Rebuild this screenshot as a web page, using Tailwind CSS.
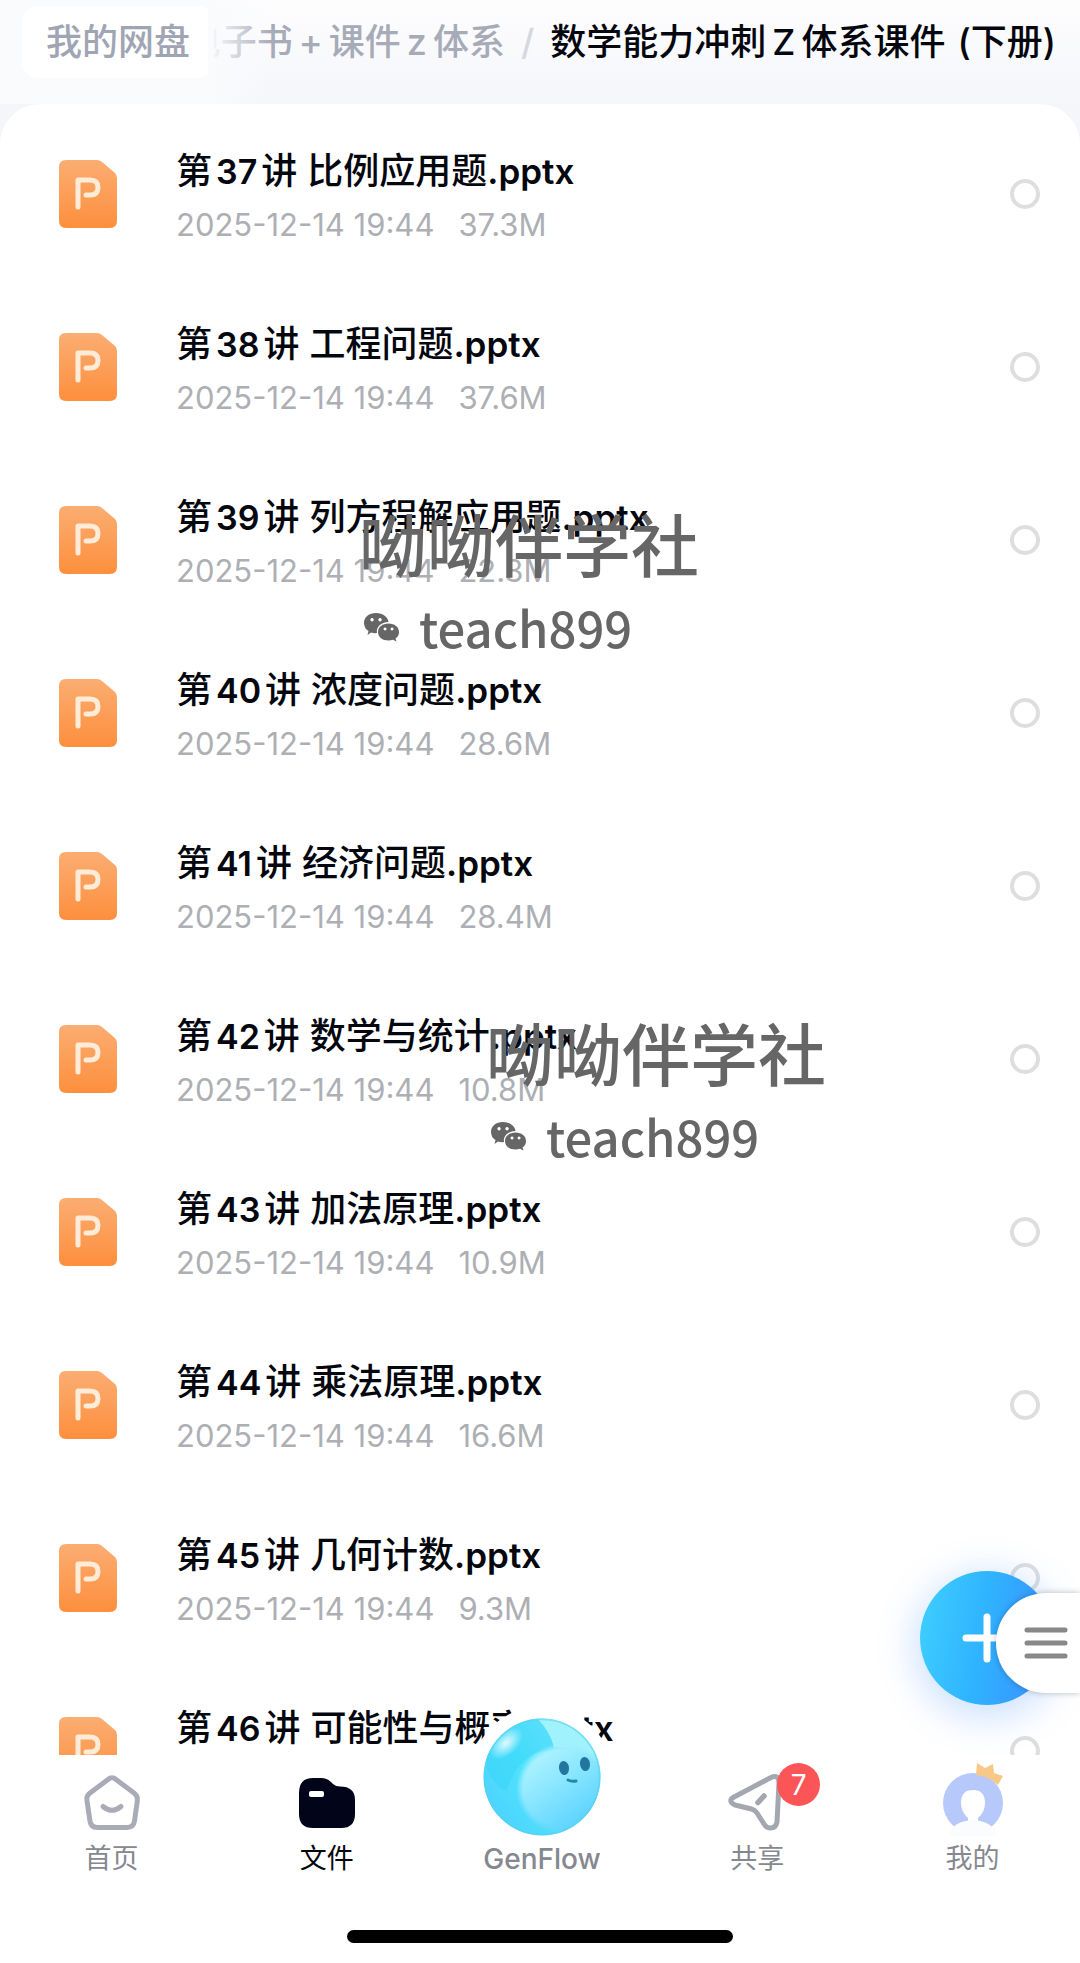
<!DOCTYPE html>
<html lang="zh-CN">
<head>
  <meta charset="UTF-8" />
  <meta name="viewport" content="width=device-width, initial-scale=1.0"/>
  <title>我的网盘</title>
  <!-- Tailwind CSS CDN -->
  <script src="https://cdn.jsdelivr.net/npm/@tailwindcss/browser@4"></script>
</head>
<body class="relative flex h-screen flex-col overflow-hidden bg-[#f5f6fa] font-['Inter','Noto_Sans_CJK_SC',sans-serif] text-[#05070f]">
  <!-- Breadcrumb -->
  <header class="relative flex h-26 shrink-0 items-center justify-end overflow-hidden bg-linear-to-b from-[#fdfdfe] to-[#f5f6fa] pr-6 pb-5 text-4xl font-medium whitespace-nowrap">
    <a href="#" class="text-[#a7abb8]">电子书<span class="mx-1.5">+</span>课件<span class="mx-1.5">z</span>体系</a>
    <span class="mx-4 text-[#d5d8de]">/</span>
    <h1>数学能力冲刺<span class="mx-1.5">Z</span>体系课件<span class="ml-3">(</span>下册<span>)</span></h1>
    <div class="absolute top-0 left-0 flex h-full items-start bg-[#fafbfd] pt-1.5 pl-[22px]">
      <a href="#" class="rounded-2xl bg-white px-6 py-4 leading-10 text-[#a0a5b4]">我的网盘</a>
    </div>
    <div class="absolute top-0 left-52 h-full w-16 bg-linear-to-r from-[#fafbfd] to-[#fafbfd]/0"></div>
  </header>

  <!-- File list -->
  <main class="min-h-0 flex-1 overflow-y-auto rounded-t-[40px] bg-white [scrollbar-width:none]">
    <ul id="fileList" class="pt-[3px]"></ul>
  </main>

  <!-- Watermarks -->
  <div class="pointer-events-none absolute top-[493px] left-[359px] font-['Noto_Sans_CJK_SC',sans-serif] font-medium text-[#666]">
    <p class="text-[68px] leading-[100px]">呦呦伴学社</p>
    <p class="flex items-center pl-1 text-[49px] leading-[68px]">
      <svg class="mr-5 size-9" viewBox="0 0 36 36" fill="currentColor"><use href="#wechat"/></svg>teach899
    </p>
  </div>
  <div class="pointer-events-none absolute top-[1002px] left-[486px] font-['Noto_Sans_CJK_SC',sans-serif] font-medium text-[#666]">
    <p class="text-[68px] leading-[100px]">呦呦伴学社</p>
    <p class="flex items-center pl-1 text-[49px] leading-[68px]">
      <svg class="mr-5 size-9" viewBox="0 0 36 36" fill="currentColor"><use href="#wechat"/></svg>teach899
    </p>
  </div>

  <!-- Floating buttons -->
  <button aria-label="新建" class="absolute right-[26px] bottom-[258px] flex size-[134px] items-center justify-center rounded-full bg-[linear-gradient(100deg,#3fd0ff_0%,#2fb4ff_45%,#3b8cff_100%)] shadow-[0_8px_36px_6px_rgba(60,140,255,0.25)]">
    <svg class="size-[50px]" viewBox="0 0 50 50" fill="none" stroke="#fff" stroke-width="7" stroke-linecap="round"><path d="M25 4v42M4 25h42"/></svg>
  </button>
  <button aria-label="菜单" class="absolute right-0 bottom-[270px] flex h-[100px] w-[84px] items-center rounded-l-full bg-white pl-7 shadow-[0_0_6px_rgba(0,0,0,0.25)]">
    <svg class="h-8 w-11" viewBox="0 0 44 32" fill="none" stroke="#888" stroke-width="5" stroke-linecap="round"><path d="M3 3h38M3 16h38M3 29h38"/></svg>
  </button>

  <!-- Tab bar -->
  <nav class="relative flex h-[208px] shrink-0 flex-col justify-between bg-white pt-4 pb-5 text-[27px] text-[#85888f]">
    <div class="grid grid-cols-5 pl-1">
      <a href="#" class="flex flex-col items-center gap-1.5">
        <svg class="size-16" viewBox="0 0 64 64" fill="none" stroke="#a9acb6" stroke-width="5" stroke-linejoin="round" stroke-linecap="round">
          <path d="M28 8.500Q32 5 36 8.500L54 22Q58 25 57.300 30L54.500 50Q53.500 56.500 47 56.500H17Q11 56.500 10 50L7 30Q6 25 10 22Z"/>
          <path d="M23 35.500Q32 43 41 35.500"/>
        </svg>
        <span class="leading-9">首页</span>
      </a>
      <a href="#" class="flex flex-col items-center gap-1.5 text-[#05070f]">
        <svg class="size-16" viewBox="0 0 64 64">
          <path fill="#02041a" d="M4 22Q4 7 18 7H26Q32 7 36 11L38 13Q41 15.500 45 15.500Q60 15.500 60 29V43Q60 57 46 57H18Q4 57 4 43Z"/>
          <rect x="14" y="20" width="15" height="6" rx="2" fill="#fff"/>
        </svg>
        <span class="leading-9">文件</span>
      </a>
      <a href="#" class="relative flex flex-col items-center gap-1.5">
        <span class="size-16"></span>
        <svg class="absolute -top-[66px] size-[144px]" viewBox="0 0 144 144">
          <defs>
            <linearGradient id="ball" x1="0.1" y1="0.8" x2="0.9" y2="0.2">
              <stop offset="0" stop-color="#4dd0ff"/><stop offset="0.45" stop-color="#4fe3fc"/><stop offset="1" stop-color="#9df1ff"/>
            </linearGradient>
            <linearGradient id="face" x1="0.2" y1="0.1" x2="0.75" y2="0.9">
              <stop offset="0" stop-color="#b4f5ff"/><stop offset="0.45" stop-color="#84e4ff"/><stop offset="1" stop-color="#4dccff"/>
            </linearGradient>
            <radialGradient id="shine"><stop offset="0" stop-color="#fff" stop-opacity="0.85"/><stop offset="1" stop-color="#fff" stop-opacity="0"/></radialGradient>
            <radialGradient id="faceFade" cx="0.5" cy="0.5" r="0.5"><stop offset="0.85" stop-color="#fff"/><stop offset="1" stop-color="#fff" stop-opacity="0"/></radialGradient>
            <mask id="faceMask"><ellipse cx="94" cy="84" rx="48" ry="46" fill="url(#faceFade)"/></mask>
            <clipPath id="ballClip"><circle cx="72" cy="72" r="58.500"/></clipPath>
          </defs>
          <circle cx="72" cy="72" r="71" fill="#fff"/>
          <g clip-path="url(#ballClip)">
            <rect width="144" height="144" fill="url(#ball)"/>
            <path d="M14 50Q30 10 72 12Q82 24 84 46Q52 42 36 86Q18 78 14 50Z" fill="#35d3f8" opacity="0.5"/>
            <path d="M66 12Q132 14 134 76Q112 40 84 42Q80 26 66 12Z" fill="#a0f2fd"/>
            <rect x="40" y="36" width="104" height="108" fill="url(#face)" mask="url(#faceMask)"/>
            <ellipse cx="36" cy="38" rx="20" ry="12" fill="url(#shine)" transform="rotate(-42 36 38)"/>
          </g>
          <circle cx="72" cy="72" r="57.500" fill="none" stroke="#59cfee" stroke-width="1.500" opacity="0.6"/>
          <ellipse cx="94" cy="63" rx="5" ry="7" fill="#23779f" transform="rotate(-8 94 63)"/>
          <ellipse cx="115" cy="59" rx="5" ry="7" fill="#23779f" transform="rotate(-8 115 59)"/>
          <path d="M98 75Q102 77 106 76" fill="none" stroke="#1f8aa5" stroke-width="3" stroke-linecap="round"/>
        </svg>
        <span class="text-[28px] leading-9 font-medium">GenFlow</span>
      </a>
      <a href="#" class="relative flex flex-col items-center gap-1.5">
        <svg class="size-16" viewBox="0 0 64 64" fill="none" stroke="#a3a7b0" stroke-width="5" stroke-linejoin="round" stroke-linecap="round">
          <path d="M9 26L46 6.500Q54 3 54 12L52 51Q51 57 45 57Q41.500 57 39 53L32 42Q30 39 26.500 38L10 34Q2 30 9 26Z"/>
          <path d="M33 31.500L39 25" stroke-width="5.500"/>
        </svg>
        <span class="absolute -top-2 left-1/2 ml-5 flex size-[43px] items-center justify-center rounded-full bg-[#fc5558] text-[28px] text-white">7</span>
        <span class="leading-9">共享</span>
      </a>
      <a href="#" class="flex flex-col items-center gap-1.5">
        <svg class="size-16 overflow-visible" viewBox="0 0 64 64">
          <circle cx="33" cy="32" r="30" fill="#b7c8fb"/>
          <path d="M21 32Q21 19 33 19Q45 19 45 32Q45 41 38 47V51H28V47Q21 41 21 32Z" fill="#fff"/>
          <path d="M9 65Q12 50 33 49Q53 50 57 65Z" fill="#fbfcfe"/>
          <path d="M37 -8L45 -3L53 -7L54 2L63 5L58 14Q49 5 36 4Z" fill="#f7c887"/>
        </svg>
        <span class="leading-9">我的</span>
      </a>
    </div>
    <div class="mx-auto h-[13px] w-[386px] rounded-full bg-black"></div>
  </nav>

  <!-- Shared symbols -->
  <svg class="absolute size-0" aria-hidden="true">
    <defs>
      <linearGradient id="pptFill" x1="0" y1="0" x2="0" y2="1"><stop offset="0" stop-color="#fbad72"/><stop offset="1" stop-color="#fd8f3d"/></linearGradient>
    </defs>
    <symbol id="ppt" viewBox="0 0 58 68">
      <path fill="url(#pptFill)" d="M7 0H38Q41 0 43 2L56 13Q58 15 58 18V61Q58 68 51 68H7Q0 68 0 61V7Q0 0 7 0Z"/>
      <path fill="none" stroke="#ffecd8" stroke-width="5" stroke-linecap="round" stroke-linejoin="round" d="M19 47V20H31Q39 20 39 27.500Q39 35 31 35H27"/>
    </symbol>
    <symbol id="wechat" viewBox="0 0 36 36">
      <path fill-rule="evenodd" d="M13 4C20 4 25 8 25.500 13C18 13 13 18 14 24Q11 24.500 8 23.500L4.500 26L5.500 22Q1 19 1 14C1 8 6 4 13 4ZM9 9a1.700 1.700 0 1 0 0.100 0ZM17 9a1.700 1.700 0 1 0 0.100 0Z"/>
      <path fill-rule="evenodd" d="M25.500 14.500C31.500 14.500 36 18 36 23Q36 27 32.500 29.500L33.500 32.500L30 30.800Q28 31.500 25.500 31.500C19.500 31.500 15 28 15 23C15 18 19.500 14.500 25.500 14.500ZM22 18.500a1.500 1.500 0 1 0 0.100 0ZM29 18.500a1.500 1.500 0 1 0 0.100 0Z"/>
    </symbol>
  </svg>

  <script>
    const files = [
      { no: 37, name: '比例应用题', size: '37.3M' },
      { no: 38, name: '工程问题', size: '37.6M' },
      { no: 39, name: '列方程解应用题', size: '22.3M' },
      { no: 40, name: '浓度问题', size: '28.6M' },
      { no: 41, name: '经济问题', size: '28.4M' },
      { no: 42, name: '数学与统计', size: '10.8M' },
      { no: 43, name: '加法原理', size: '10.9M' },
      { no: 44, name: '乘法原理', size: '16.6M' },
      { no: 45, name: '几何计数', size: '9.3M' },
      { no: 46, name: '可能性与概率', size: '12.5M' }
    ];

    document.getElementById('fileList').innerHTML = files.map(f => `
      <li class="flex h-[173px] items-center pr-10 pl-[59px]">
        <svg class="mr-[59px] h-[68px] w-[58px] shrink-0"><use href="#ppt"/></svg>
        <label for="file${f.no}" class="flex-1">
          <span class="block text-4xl leading-[50px] font-medium">第<span class="mx-1 text-[34px] font-semibold">${f.no}</span>讲<span class="ml-2.5">${f.name}</span><span class="text-[35px] font-semibold">.pptx</span></span>
          <span class="mt-3 flex gap-6 text-[31px] leading-8 text-[#adafb4]"><span>2025-12-14 19:44</span><span>${f.size}</span></span>
        </label>
        <input id="file${f.no}" type="checkbox" class="size-[30px] appearance-none rounded-full border-4 border-[#dedede] checked:bg-[#2fa8ff]">
      </li>`).join('');
  </script>
</body>
</html>
